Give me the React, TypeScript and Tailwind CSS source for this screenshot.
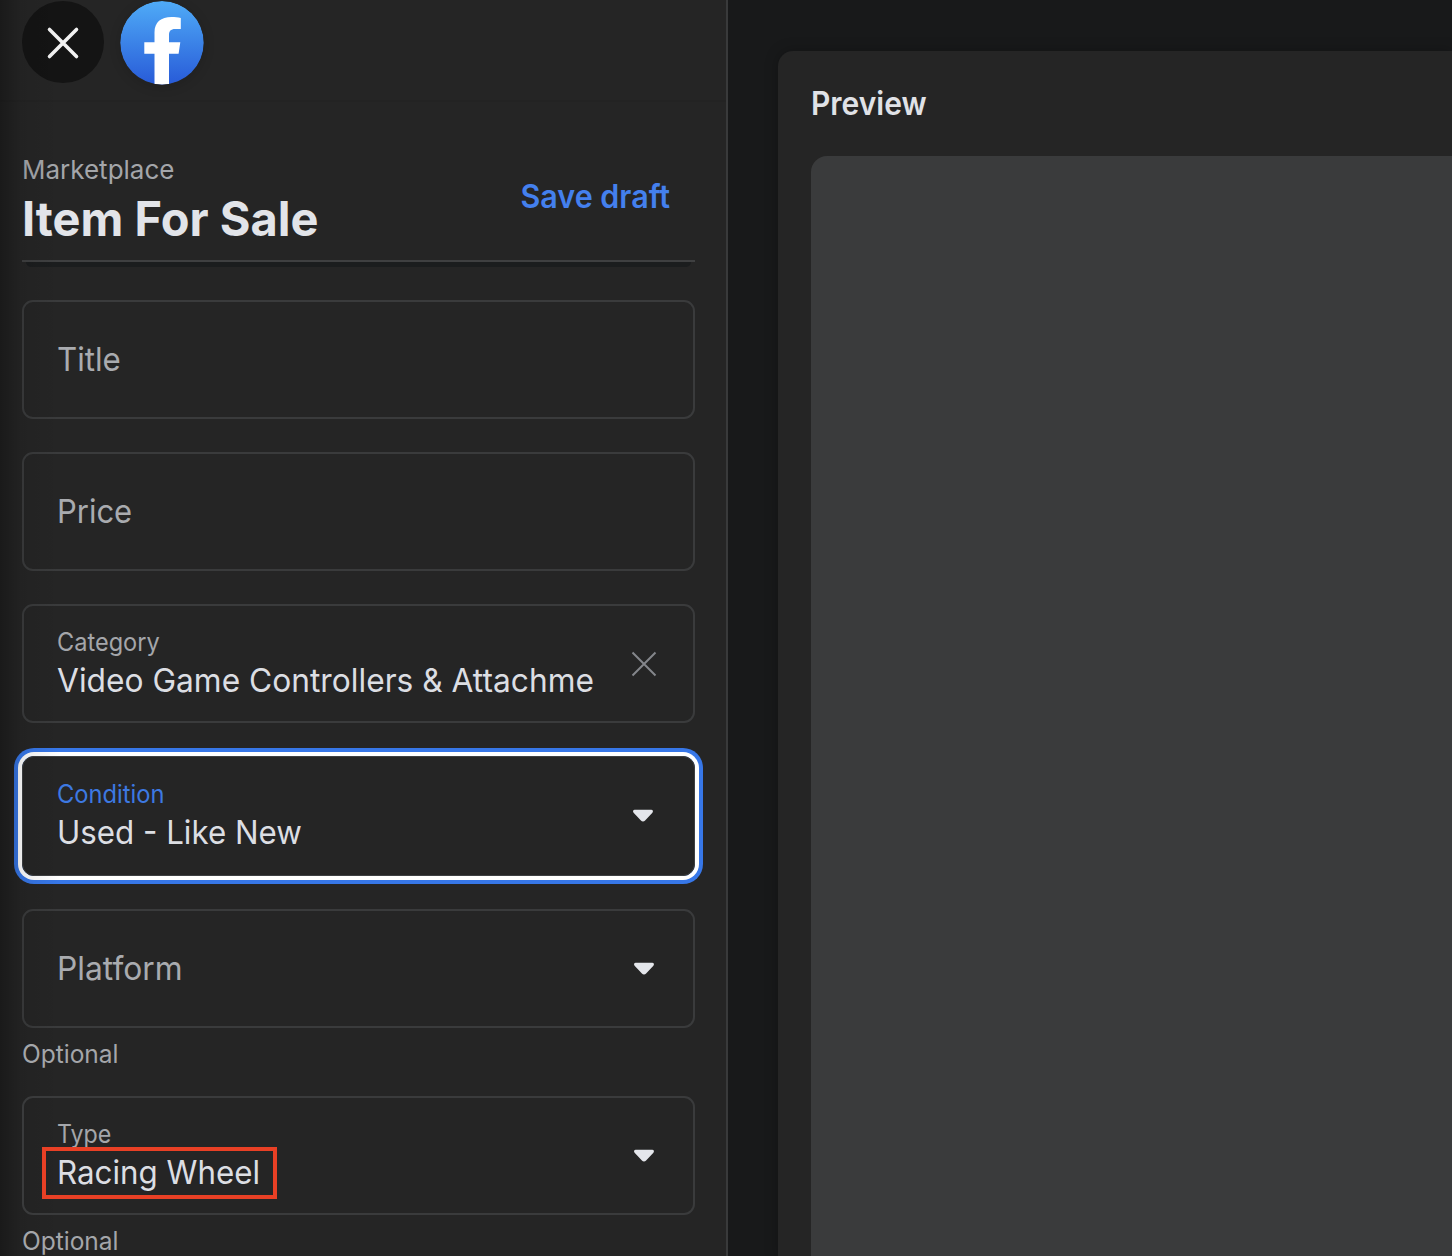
import type { ReactNode } from "react";

function Caret() {
  return (
    <svg className="h-[14px] w-[22px] shrink-0" viewBox="0 0 22 14" fill="#e4e6eb">
      <path d="M2.700 .7h16.600c1.600 0 2.200 1.900 1.100 3l-7.300 7.800c-1.200 1.300-3 1.300-4.200 0L1.600 3.700C.5 2.600 1.100 .7 2.700 .7Z" />
    </svg>
  );
}

function Field({ label, value, focused, fit, labelFit, children }: {
  label?: string;
  value: string;
  focused?: boolean;
  fit: string;
  labelFit?: string;
  children?: ReactNode;
}) {
  return (
    <div
      className={
        focused
          ? "flex h-[120px] shrink-0 items-center justify-between rounded-[12px] border border-[#3e4042] pr-[40px] pb-px pl-[34px] shadow-[0_0_0_4px_#ffffff,0_0_0_8px_#3777e8]"
          : "flex h-[119px] shrink-0 items-center justify-between rounded-[11px] border-2 border-[#3a3b3c] pr-[38.5px] pl-[33px]"
      }
    >
      {label ? (
        <div className="-mt-px flex flex-col items-start whitespace-nowrap">
          <span className={`origin-left text-[25px] leading-[34px] ${labelFit} ${focused ? "text-[#3d79e2]" : "text-[#a4a6aa]"}`}>
            {label}
          </span>
          <span className={`origin-left text-[33px] leading-[42px] text-[#dcdee3] ${fit}`}>{value}</span>
        </div>
      ) : (
        <span className={`-mt-[2px] origin-left text-[33px] leading-[42px] text-[#a9abaf] ${fit}`}>{value}</span>
      )}
      {children}
    </div>
  );
}

export default function App() {
  return (
    <div className="flex h-[1256px] w-[1452px] overflow-hidden bg-[#18191a] font-['Inter',sans-serif]">
      <aside className="relative flex h-full w-[728px] shrink-0 flex-col border-r-2 border-[#393a3b] bg-[#252525]">
        <div className="pointer-events-none absolute inset-y-0 left-0 w-[60px] bg-linear-to-r from-black/30 via-black/8 via-35% to-transparent" />
        <header className="flex h-[102px] shrink-0 gap-[15.5px] border-b-2 border-[#232323] pt-px pl-[22px]">
          <div className="flex size-[82px] items-center justify-center rounded-full bg-[#141414] pt-px">
            <svg className="size-[34px]" viewBox="0 0 34 34" fill="none" stroke="#f2f2f2" strokeWidth="3.6" strokeLinecap="round">
              <path d="M3.5 3.5l27 27M30.5 3.5l-27 27" />
            </svg>
          </div>
          <svg className="size-[84px] rounded-full shadow-[0_2px_12px_rgba(0,0,0,0.15)]" viewBox="0 0 84 84">
            <defs>
              <linearGradient id="fb" x1="0" y1="0" x2="0" y2="1">
                <stop offset="0" stopColor="#4fabf7" />
                <stop offset="1" stopColor="#285bd8" />
              </linearGradient>
              <clipPath id="disc"><circle cx="42" cy="41.7" r="41.7" /></clipPath>
            </defs>
            <circle cx="42" cy="41.7" r="41.7" fill="url(#fb)" />
            <path clipPath="url(#disc)" fill="#fff" d="M34.5 84V52.7H24.300V41.3h10.200V31.500C34.500 21 41 16 51.500 16c3.500 0 6.500.3 9.300.9V28h-5.500C50.500 28 49 30.200 49 34v7.300h11.300l-1.700 11.400H49V84Z" />
          </svg>
        </header>

        <div className="mx-[22px] mr-[31px] flex h-[160px] shrink-0 items-start justify-between border-b-2 border-[#3f4041]">
          <div className="flex flex-col items-start pt-[50px] whitespace-nowrap">
            <span className="text-[26px] leading-[36px] text-[#a4a6aa]">Marketplace</span>
            <h1 className="origin-left scale-x-[0.978] text-[48px] leading-[62px] font-bold text-[#e2e4e9]">Item For Sale</h1>
          </div>
          <button className="mt-[75px] mr-[25px] origin-right scale-x-[0.952] text-[32px] leading-[40px] font-semibold whitespace-nowrap text-[#4480ee]">Save draft</button>
        </div>
        <div className="mr-[35px] ml-[26px] h-[5px] shrink-0 rounded-b-[8px] bg-[#1b1d1e]" />

        <div className="mt-[33px] mr-[31px] ml-[22px] flex flex-col">
          <div className="flex flex-col gap-[33px]">
            <Field value="Title" fit="scale-x-[0.948]" />
            <Field value="Price" fit="scale-x-[0.938]" />
            <Field label="Category" value="Video Game Controllers & Attachme" fit="scale-x-[0.961]" labelFit="scale-x-[0.942]">
              <svg className="-mr-[2.5px] size-[26px] shrink-0" viewBox="0 0 26 26" fill="none" stroke="#84868b" strokeWidth="2">
                <path d="M1.500 1.500l23 23M24.500 1.500l-23 23" />
              </svg>
            </Field>
            <Field label="Condition" value="Used - Like New" fit="scale-x-[0.948]" labelFit="scale-x-[0.947]" focused><Caret /></Field>
            <Field value="Platform" fit="scale-x-[0.963]"><Caret /></Field>
          </div>
          <span className="mt-[8px] origin-left scale-x-[0.98] text-[25px] leading-[36px] text-[#a4a6aa]">Optional</span>
          <div className="relative mt-[24px]">
            <Field label="Type" value="Racing Wheel" fit="scale-x-[0.949]" labelFit="scale-x-[0.93]"><Caret /></Field>
            <div className="absolute top-[51px] left-[20px] h-[52px] w-[234.5px] border-4 border-[#e94025]" />
          </div>
          <span className="mt-[8px] origin-left scale-x-[0.98] text-[25px] leading-[36px] text-[#a4a6aa]">Optional</span>
        </div>
      </aside>

      <main className="flex flex-1 pt-[51px] pl-[49.500px]">
        <section className="flex flex-1 flex-col rounded-tl-[15px] bg-[#252525] pl-[33px] shadow-[0_0_14px_rgba(0,0,0,0.25)]">
          <h2 className="mt-[33px] w-max origin-left scale-x-[0.937] text-[32px] leading-[40px] font-semibold text-[#e0e2e7]">Preview</h2>
          <div className="mt-[32px] flex-1 rounded-tl-[16px] bg-[#3a3b3c]" />
        </section>
      </main>
    </div>
  );
}
